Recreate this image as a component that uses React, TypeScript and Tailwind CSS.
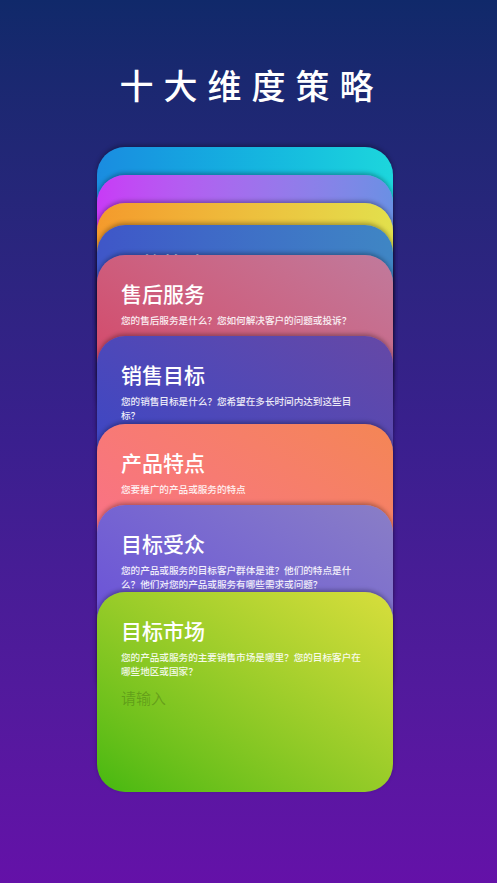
import React from 'react';

type Card = {
  title: string;
  lines: string[];
  offset: string;
  bg: string;
  placeholder?: boolean;
};

// the first four cards sit under the stack, only their top edge shows
const cards: Card[] = [
  {
    title: '行业现状',
    lines: [],
    offset: 'mt-0',
    bg: 'bg-linear-to-r from-[#1a8ce0] to-[#1dd6dc]',
  },
  {
    title: '竞争对手',
    lines: [],
    offset: '-mt-[172px]',
    bg: 'bg-linear-to-r from-[#c83af6] to-[#6a90e4]',
  },
  {
    title: '营销渠道',
    lines: [],
    offset: '-mt-[172px]',
    bg: 'bg-linear-to-r from-[#f49a2c] to-[#e2e04c]',
  },
  {
    title: '价格策略',
    lines: [],
    offset: '-mt-[178px]',
    bg: 'bg-linear-to-r from-[#3f56c8] to-[#3f86c4]',
  },
  {
    title: '售后服务',
    lines: ['您的售后服务是什么？您如何解决客户的问题或投诉？'],
    offset: '-mt-[170px]',
    bg: 'bg-linear-to-tr from-[#d8345c] to-[#c07a9c]',
  },
  {
    title: '销售目标',
    lines: ['您的销售目标是什么？您希望在多长时间内达到这些目', '标？'],
    offset: '-mt-[119px]',
    bg: 'bg-linear-to-tr from-[#2f45cc] to-[#6548a6]',
  },
  {
    title: '产品特点',
    lines: ['您要推广的产品或服务的特点'],
    offset: '-mt-[112px]',
    bg: 'bg-linear-to-tr from-[#fb6a92] to-[#f48654]',
  },
  {
    title: '目标受众',
    lines: ['您的产品或服务的目标客户群体是谁？他们的特点是什', '么？他们对您的产品或服务有哪些需求或问题？'],
    offset: '-mt-[119px]',
    bg: 'bg-linear-to-tr from-[#6442dc] to-[#8a7ec6]',
  },
  {
    title: '目标市场',
    lines: ['您的产品或服务的主要销售市场是哪里？您的目标客户在', '哪些地区或国家？'],
    offset: '-mt-[113px]',
    bg: 'bg-linear-to-tr from-[#44b810] to-[#d8de3c]',
    placeholder: true,
  },
];

export default function App() {
  return (
    <div
      className="h-[883px] w-full overflow-hidden bg-linear-to-b from-[#10296a] via-[#3a1f8e] to-[#6411a8]"
      style={{ fontFamily: '"Noto Sans CJK SC", "Noto Sans", sans-serif' }}
    >
      <h1 className="pt-[63px] pl-[6px] text-center text-[34px] leading-[44px] font-medium tracking-[10px] text-white">
        十大维度策略
      </h1>

      <div className="mt-[40px] ml-[97px] w-[296px]">
        {cards.map((card) => (
          <div
            key={card.title}
            className={`relative h-[200px] overflow-hidden rounded-[28px] px-[24px] pt-[24px] shadow-[0_-2px_4px_rgba(0,0,0,0.3)] ${card.offset} ${card.bg}`}
          >
            <h2 className="text-[21px] leading-[28px] font-medium text-white">{card.title}</h2>
            {card.lines.length > 0 && (
              <p className="mt-[6px] text-[9.6px] leading-[14px] font-medium text-white/90">
                {card.lines.map((line, i) => (
                  <span key={i} className="block whitespace-nowrap">
                    {line}
                  </span>
                ))}
              </p>
            )}
            {card.placeholder && (
              <div className="mt-[10px] text-[15px] leading-[20px] text-black/20">请输入</div>
            )}
          </div>
        ))}
      </div>
    </div>
  );
}
